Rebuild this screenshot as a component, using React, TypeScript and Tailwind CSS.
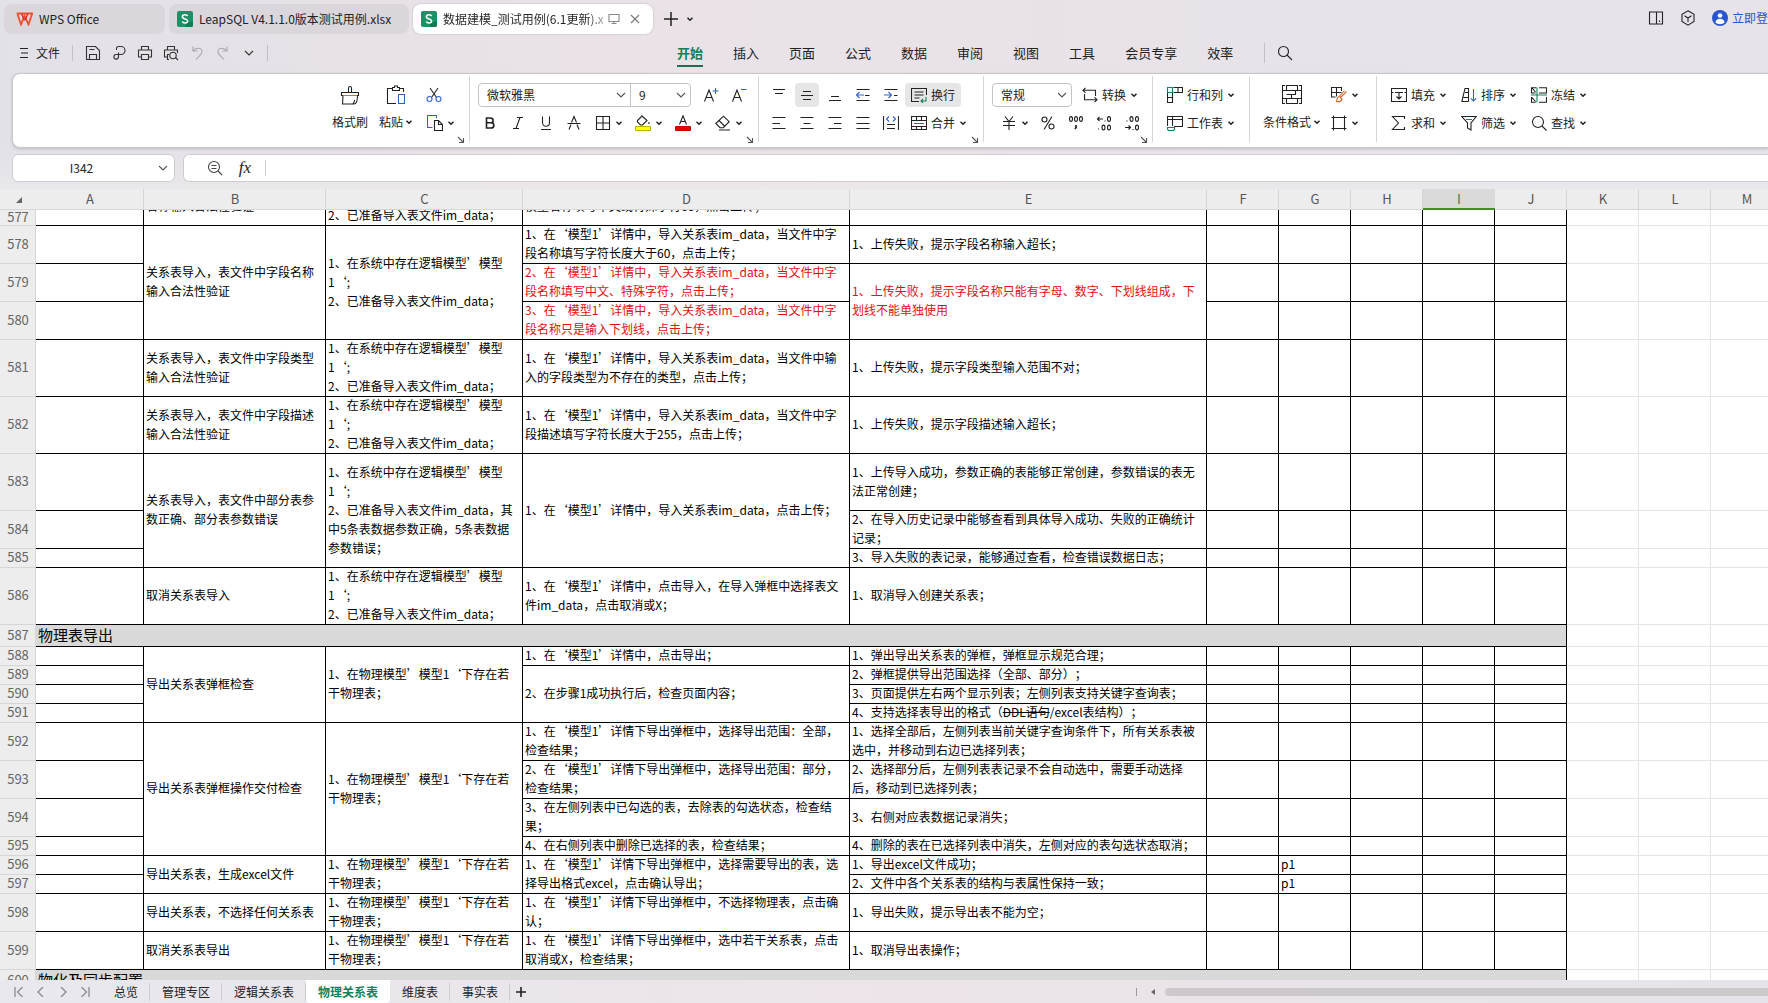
import { useLayoutEffect, useRef } from 'react';
import type { ReactNode } from 'react';

type Cell = { text: ReactNode; span?: number; red?: boolean };
type Row = {
    no: number;
    height: string;
    title?: string;
    b?: Cell;
    c?: Cell;
    d?: Cell;
    e?: Cell;
    g?: string;
};

const H1 = 'h-[19px]';
const H2 = 'h-[38px]';
const H3 = 'h-[57px]';
const HT = 'h-[22px]';

const logicModel = '1、在系统中存在逻辑模型’模型\n1‘;\n2、已准备导入表文件im_data；';
const physicalModel = '1、在物理模型’模型1‘下存在若\n干物理表；';

const rows: Row[] = [
    {
        no: 577,
        height: H3,
        b: { text: '关系表导入，表文件中表\n名称输入合法性验证' },
        c: { text: logicModel },
        d: { text: '1、在‘模型1’详情中，导入关系表im_data，当文件中\n模型名称填写中文或特殊字符60，点击上传；' },
        e: { text: '1、上传失败；' },
    },
    {
        no: 578,
        height: H2,
        b: { text: '关系表导入，表文件中字段名称\n输入合法性验证', span: 3 },
        c: { text: logicModel, span: 3 },
        d: { text: '1、在‘模型1’详情中，导入关系表im_data，当文件中字\n段名称填写字符长度大于60，点击上传；' },
        e: { text: '1、上传失败，提示字段名称输入超长；' },
    },
    {
        no: 579,
        height: H2,
        d: { text: '2、在‘模型1’详情中，导入关系表im_data，当文件中字\n段名称填写中文、特殊字符，点击上传；', red: true },
        e: { text: '1、上传失败，提示字段名称只能有字母、数字、下划线组成，下\n划线不能单独使用', span: 2, red: true },
    },
    {
        no: 580,
        height: H2,
        d: { text: '3、在‘模型1’详情中，导入关系表im_data，当文件中字\n段名称只是输入下划线，点击上传；', red: true },
    },
    {
        no: 581,
        height: H3,
        b: { text: '关系表导入，表文件中字段类型\n输入合法性验证' },
        c: { text: logicModel },
        d: { text: '1、在‘模型1’详情中，导入关系表im_data，当文件中输\n入的字段类型为不存在的类型，点击上传；' },
        e: { text: '1、上传失败，提示字段类型输入范围不对；' },
    },
    {
        no: 582,
        height: H3,
        b: { text: '关系表导入，表文件中字段描述\n输入合法性验证' },
        c: { text: logicModel },
        d: { text: '1、在‘模型1’详情中，导入关系表im_data，当文件中字\n段描述填写字符长度大于255，点击上传；' },
        e: { text: '1、上传失败，提示字段描述输入超长；' },
    },
    {
        no: 583,
        height: H3,
        b: { text: '关系表导入，表文件中部分表参\n数正确、部分表参数错误', span: 3 },
        c: {
            text: '1、在系统中存在逻辑模型’模型\n1‘;\n2、已准备导入表文件im_data，其\n中5条表数据参数正确，5条表数据\n参数错误；',
            span: 3,
        },
        d: { text: '1、在‘模型1’详情中，导入关系表im_data，点击上传；', span: 3 },
        e: { text: '1、上传导入成功，参数正确的表能够正常创建，参数错误的表无\n法正常创建；' },
    },
    { no: 584, height: H2, e: { text: '2、在导入历史记录中能够查看到具体导入成功、失败的正确统计\n记录；' } },
    { no: 585, height: H1, e: { text: '3、导入失败的表记录，能够通过查看，检查错误数据日志；' } },
    {
        no: 586,
        height: H3,
        b: { text: '取消关系表导入' },
        c: { text: logicModel },
        d: { text: '1、在‘模型1’详情中，点击导入，在导入弹框中选择表文\n件im_data，点击取消或X；' },
        e: { text: '1、取消导入创建关系表；' },
    },
    { no: 587, height: HT, title: '物理表导出' },
    {
        no: 588,
        height: H1,
        b: { text: '导出关系表弹框检查', span: 4 },
        c: { text: physicalModel, span: 4 },
        d: { text: '1、在‘模型1’详情中，点击导出；' },
        e: { text: '1、弹出导出关系表的弹框，弹框显示规范合理；' },
    },
    {
        no: 589,
        height: H1,
        d: { text: '2、在步骤1成功执行后，检查页面内容；', span: 3 },
        e: { text: '2、弹框提供导出范围选择（全部、部分）；' },
    },
    { no: 590, height: H1, e: { text: '3、页面提供左右两个显示列表；左侧列表支持关键字查询表；' } },
    { no: 591, height: H1, e: { text: <>4、支持选择表导出的格式（<s>DDL语句</s>/excel表结构）；</> } },
    {
        no: 592,
        height: H2,
        b: { text: '导出关系表弹框操作交付检查', span: 4 },
        c: { text: physicalModel, span: 4 },
        d: { text: '1、在‘模型1’详情下导出弹框中，选择导出范围：全部，\n检查结果；' },
        e: { text: '1、选择全部后，左侧列表当前关键字查询条件下，所有关系表被\n选中，并移动到右边已选择列表；' },
    },
    {
        no: 593,
        height: H2,
        d: { text: '2、在‘模型1’详情下导出弹框中，选择导出范围：部分，\n检查结果；' },
        e: { text: '2、选择部分后，左侧列表表记录不会自动选中，需要手动选择\n后，移动到已选择列表；' },
    },
    {
        no: 594,
        height: H2,
        d: { text: '3、在左侧列表中已勾选的表，去除表的勾选状态，检查结\n果；' },
        e: { text: '3、右侧对应表数据记录消失；' },
    },
    {
        no: 595,
        height: H1,
        d: { text: '4、在右侧列表中删除已选择的表，检查结果；' },
        e: { text: '4、删除的表在已选择列表中消失，左侧对应的表勾选状态取消；' },
    },
    {
        no: 596,
        height: H1,
        b: { text: '导出关系表，生成excel文件', span: 2 },
        c: { text: physicalModel, span: 2 },
        d: { text: '1、在‘模型1’详情下导出弹框中，选择需要导出的表，选\n择导出格式excel，点击确认导出；', span: 2 },
        e: { text: '1、导出excel文件成功；' },
        g: 'p1',
    },
    { no: 597, height: H1, e: { text: '2、文件中各个关系表的结构与表属性保持一致；' }, g: 'p1' },
    {
        no: 598,
        height: H2,
        b: { text: '导出关系表，不选择任何关系表' },
        c: { text: physicalModel },
        d: { text: '1、在‘模型1’详情下导出弹框中，不选择物理表，点击确\n认；' },
        e: { text: '1、导出失败，提示导出表不能为空；' },
    },
    {
        no: 599,
        height: H2,
        b: { text: '取消关系表导出' },
        c: { text: physicalModel },
        d: { text: '1、在‘模型1’详情下导出弹框中，选中若干关系表，点击\n取消或X，检查结果；' },
        e: { text: '1、取消导出表操作；' },
    },
    { no: 600, height: HT, title: '物化及同步配置' },
];

const columns = ['A', 'B', 'C', 'D', 'E', 'F', 'G', 'H', 'I', 'J', 'K', 'L', 'M'];
const menus = ['开始', '插入', '页面', '公式', '数据', '审阅', '视图', '工具', '会员专享', '效率'];
const sheets = ['总览', '管理专区', '逻辑关系表', '物理关系表', '维度表', '事实表'];

const GREEN = '#1a8060';
const BLUE = '#3560d0';

function Icon({ children, size = 16, className = '' }: { children: ReactNode; size?: number; className?: string }) {
    return (
        <svg
            width={size}
            height={size}
            viewBox={`0 0 ${size} ${size}`}
            fill="none"
            stroke="currentColor"
            strokeWidth="1.1"
            className={`shrink-0 ${className}`}
            aria-hidden="true"
        >
            {children}
        </svg>
    );
}

function Caret() {
    return (
        <Icon size={8}>
            <path d="M1.5 2.8 4 5.2l2.5-2.4" strokeWidth="1.5" />
        </Icon>
    );
}

function Chevron({ className = '' }: { className?: string }) {
    return (
        <Icon size={10} className={className}>
            <path d="M1 3l4 4 4-4" />
        </Icon>
    );
}

function Corner() {
    return (
        <Icon size={8} className="absolute right-1 -bottom-0.5 text-[#555]">
            <path d="M1 1l5 5M6.5 2v4.5H2" />
        </Icon>
    );
}

function Divider() {
    return <div className="h-[66px] w-px shrink-0 bg-[#d6d6d6]" />;
}

function IconButton({ label, active, children }: { label: string; active?: boolean; children: ReactNode }) {
    return (
        <button
            aria-label={label}
            className={`flex h-6 w-7 shrink-0 items-center justify-center ${active ? '' : 'hover:bg-black/5'}`}
        >
            <span className={`flex h-6 w-6 items-center justify-center rounded ${active ? 'bg-[#e6e6e6]' : ''}`}>{children}</span>
        </button>
    );
}

function DropButton({ label, children }: { label: string; children: ReactNode }) {
    return (
        <button aria-label={label} className="flex h-6 w-10 shrink-0 items-center gap-1 pl-[7px] hover:bg-black/5">
            {children}
            <Caret />
        </button>
    );
}

function TextButton({ text, caret = true, active, children }: { text: string; caret?: boolean; active?: boolean; children: ReactNode }) {
    return (
        <button
            className={`flex h-6 shrink-0 items-center gap-1 rounded px-1.5 whitespace-nowrap ${active ? 'bg-[#e6e6e6]' : 'hover:bg-black/5'}`}
        >
            {children}
            <span>{text}</span>
            {caret && <Caret />}
        </button>
    );
}

function SheetLogo() {
    return (
        <svg width="16" height="16" viewBox="0 0 16 16" className="shrink-0" aria-hidden="true">
            <rect width="16" height="16" rx="2" fill="#1a9265" />
            <path d="M9 16h5a2 2 0 0 0 2-2v-3H9z" fill="#117a50" />
            <path
                d="M10.6 5.2C10.1 4.2 9.2 3.8 8 3.8c-1.500 0-2.600.8-2.600 2 0 1.300 1.100 1.700 2.600 2.100 1.500.4 2.600.8 2.600 2.100 0 1.200-1.100 2-2.600 2-1.300 0-2.300-.5-2.700-1.600"
                fill="none"
                stroke="#fff"
                strokeWidth="1.6"
            />
        </svg>
    );
}

function TitleBar() {
    return (
        <div className="flex h-9 shrink-0 items-start gap-1 pt-1 pl-1">
            <button className="flex h-[30px] w-[161px] shrink-0 items-center gap-1.5 rounded-lg bg-[#dad6dc] pl-3">
                <svg width="17" height="14" viewBox="0 0 17 14" fill="none" strokeWidth="1.800" className="shrink-0" aria-hidden="true">
                    <path d="M.8 1.500h15.400l-3.700 11L8.500 4 5 12.500 1.300 1.500" stroke="#f0502c" />
                    <path d="M5.500 1.500l3 7M11.800 1.500L9.300 8" stroke="#d6302a" strokeWidth="1.400" />
                </svg>
                WPS Office
            </button>
            <button className="flex h-[30px] w-[240px] shrink-0 items-center gap-1.5 rounded-lg bg-[#dad6dc] pl-2">
                <SheetLogo />
                <span className="whitespace-nowrap">LeapSQL V4.1.1.0版本测试用例.xlsx</span>
            </button>
            <div className="flex h-[30px] w-[240px] shrink-0 items-center rounded-lg bg-white pr-2 pl-2 shadow-[0_0_2px_#b5b0b8]">
                <SheetLogo />
                <span className="ml-1.5 w-[161px] overflow-hidden bg-linear-to-r from-[#222] from-90% to-[#bbb] bg-clip-text whitespace-nowrap text-transparent">
                    数据建模_测试用例(6.1更新).xlsx
                </span>
                <Icon size={12} className="ml-1 text-[#888]">
                    <path d="M1 1.500h10v7H1zM6 8.500v2M3.500 10.500h5" />
                </Icon>
                <button aria-label="关闭" className="ml-2.5">
                    <Icon size={10} className="text-[#777]">
                        <path d="M1 1l8 8M9 1L1 9" />
                    </Icon>
                </button>
            </div>
            <button aria-label="新建" className="ml-[7px] flex h-[30px] items-center">
                <Icon size={14}>
                    <path d="M7 0v14M0 7h14" strokeWidth="1.500" />
                </Icon>
            </button>
            <button aria-label="更多标签" className="ml-1 flex h-[30px] items-center">
                <Caret />
            </button>
            <div className="ml-auto flex h-7 w-[120px] shrink-0 items-center overflow-hidden whitespace-nowrap">
                <Icon className="mr-4">
                    <path d="M1.500 2h13v12h-13zM8.500 2v12M11.500 10.500v1.500" />
                </Icon>
                <Icon className="mr-4">
                    <path d="M8 .8l6 3.500v7.200L8 15.200 2 11.500V4.300zM4.500 5.800L8 8l3.500-2.200M8 8v4" />
                </Icon>
                <button className="flex items-center gap-1 text-[#2a55d0]">
                    <svg width="16" height="16" viewBox="0 0 16 16" className="shrink-0" aria-hidden="true">
                        <circle cx="8" cy="8" r="8" fill="#2a55d0" />
                        <circle cx="8" cy="5.500" r="2.300" fill="#fff" />
                        <path d="M3.500 12.500c0-5 9-5 9 0-2 2.200-7 2.200-9 0z" fill="#fff" />
                    </svg>
                    <span>立即登录</span>
                </button>
            </div>
        </div>
    );
}

function MenuBar() {
    return (
        <div className="mb-[3px] grid h-[34px] shrink-0 grid-cols-[670px_1fr] items-center">
            <div className="flex items-center pl-[18px]">
                <button className="flex items-center gap-1.5">
                    <Icon size={12}>
                        <path d="M2 1.500h8M3 6h7M2 10.500h8" />
                    </Icon>
                    文件
                </button>
                <div className="mx-3 h-4 w-px bg-[#c4c0c6]" />
                <div className="flex items-center gap-2.5 text-[#333]">
                    <button aria-label="保存">
                        <Icon>
                            <path d="M1.500 1.500h9l4 4v9h-13zM4.500 14.500v-5h7v5M4.500 4.500h5" />
                        </Icon>
                    </button>
                    <button aria-label="输出为PDF">
                        <Icon>
                            <path d="M5.500 5V3a2 2 0 0 1 2-1.500h2.500a4 4 0 0 1 0 8H5a2.300 2.300 0 1 0 2.500 2.300V7.500" />
                        </Icon>
                    </button>
                    <button aria-label="打印">
                        <Icon>
                            <path d="M4.500 5V1.500h7V5M4 12H1.500V5h13v7H12M4.500 9.500h7v5h-7z" />
                        </Icon>
                    </button>
                    <button aria-label="打印预览">
                        <Icon>
                            <path d="M4.500 5V1.500h7V5M4 12H1.500V5h13v3M6 14.500H4.500v-5H6M12.500 12.500l2.500 2.500" />
                            <circle cx="10" cy="10.500" r="3.200" />
                        </Icon>
                    </button>
                    <button aria-label="撤销" className="text-[#aaa6ac]">
                        <Icon>
                            <path d="M4 1.500v4.500h4.500M4 6c3-4 9-3.500 9 .8 0 3-3.500 4.500-6 7.700" />
                        </Icon>
                    </button>
                    <button aria-label="恢复" className="text-[#aaa6ac]">
                        <Icon>
                            <path d="M12 1.500v4.500H7.500M12 6C9 2 3 2.500 3 6.800c0 3 3.500 4.500 6 7.700" />
                        </Icon>
                    </button>
                    <button aria-label="更多" className="px-[3px]">
                        <Chevron />
                    </button>
                </div>
                <div className="ml-2.5 h-4 w-px bg-[#c4c0c6]" />
            </div>
            <div className="flex h-full items-center">
                {menus.map((item, i) => (
                    <button
                        key={item}
                        className={
                            i === 0
                                ? 'mr-[15px] ml-[7px] flex h-7 items-center border-b-2 border-[#1a7050] pt-0.5 text-[13px] font-bold text-[#14805a]'
                                : 'flex h-7 items-center px-[15px] text-[13px] whitespace-nowrap'
                        }
                    >
                        {item}
                    </button>
                ))}
                <div className="mr-3 ml-4 h-5 w-px bg-[#c4c0c6]" />
                <button aria-label="搜索">
                    <Icon>
                        <circle cx="6.500" cy="6.500" r="5" />
                        <path d="M10 10l5 5" />
                    </Icon>
                </button>
            </div>
        </div>
    );
}

function Select({ label, value, className }: { label: string; value: string; className: string }) {
    return (
        <label className={`relative flex h-full items-center ${className}`}>
            <select aria-label={label} className="h-full w-full appearance-none bg-transparent pl-2 outline-none">
                <option>{value}</option>
            </select>
            <Chevron className="pointer-events-none absolute right-1 text-[#555]" />
        </label>
    );
}

function Ribbon() {
    return (
        <div className="ml-3 flex h-[75px] shrink-0 items-start overflow-hidden rounded-l-lg border border-r-0 border-[#cbc7cd] bg-white pt-0.5 pl-[315px] shadow-[0_1px_3px_#bcb8be]">
            <div className="relative flex h-[66px] w-[141px] shrink-0 items-center">
                <button className="flex w-11 shrink-0 flex-col items-center gap-1.5 whitespace-nowrap">
                    <Icon size={20}>
                        <path d="M8.500 7V3a1.500 1.500 0 0 1 3 0v4M1.500 7.500h17v3h-17zM3 10.500L2.500 19H14c2.500 0 3.500-3 3.500-8.500M13 19c1-1 1.500-2.500 1.500-4" />
                        <path d="M3 10.500h14" stroke="#c9722e" />
                    </Icon>
                    <span className="h-[22px] leading-[22px]">格式刷</span>
                </button>
                <button className="flex w-12 shrink-0 flex-col items-center gap-1.5 whitespace-nowrap">
                    <Icon size={20}>
                        <path d="M6 3.500H1.500v15H10M14 3.500h3.500V7M6.500 5.500v-3h2v-1.500h3v1.500h2v3z" />
                        <path d="M12.500 9.500h6v9h-6z" stroke="#3560b0" />
                    </Icon>
                    <span className="flex h-[22px] items-center gap-0.5">
                        粘贴
                        <Caret />
                    </span>
                </button>
                <div className="flex flex-col gap-1">
                    <IconButton label="剪切">
                        <Icon>
                            <path d="M4 1l6.500 9.500M12 1L5.500 10.500" />
                            <circle cx="3.500" cy="12" r="2.500" stroke={BLUE} />
                            <circle cx="12.500" cy="12" r="2.500" stroke={BLUE} />
                        </Icon>
                    </IconButton>
                    <DropButton label="复制">
                        <Icon>
                            <path d="M5.500 12.500h-5v-12h9V3" stroke={BLUE} />
                            <path d="M7.500 5.500h4l4 4v6h-8zM11.500 5.500v4h4" />
                        </Icon>
                    </DropButton>
                </div>
                <Corner />
            </div>
            <Divider />

            <div className="relative flex h-[66px] w-[288px] shrink-0 flex-col justify-center gap-1 pl-1.5">
                <div className="flex h-6 items-center">
                    <div className="mr-1.5 ml-0.5 flex h-6 w-[213px] items-center rounded border border-[#c2c2c2]">
                        <Select label="字体" value="微软雅黑" className="w-[152px] border-r border-[#c2c2c2]" />
                        <Select label="字号" value="9" className="flex-1" />
                    </div>
                    <IconButton label="增大字号">
                        <Icon>
                            <path d="M1.500 14.500L6 3l4.500 11.500M3 10.500h6" />
                            <path d="M12.500 1v6M9.500 4h6" stroke={BLUE} />
                        </Icon>
                    </IconButton>
                    <IconButton label="减小字号">
                        <Icon>
                            <path d="M1.500 14.500L6 3l4.500 11.500M3 10.500h6" />
                            <path d="M10 2.500h5.500" stroke={BLUE} />
                        </Icon>
                    </IconButton>
                </div>
                <div className="flex h-6 items-center">
                    <IconButton label="加粗">
                        <Icon>
                            <path d="M4.500 3h4c3.500 0 3.500 4.800 0 4.800h-4zM4.500 7.800H9c3.800 0 3.800 5.200 0 5.200H4.500z" strokeWidth="1.600" />
                        </Icon>
                    </IconButton>
                    <IconButton label="倾斜">
                        <Icon>
                            <path d="M7 2.500h6M3 13.500h6M10 2.500l-4 11" />
                        </Icon>
                    </IconButton>
                    <IconButton label="下划线">
                        <Icon>
                            <path d="M4.500 1.500v6c0 5 7 5 7 0v-6M3 14.500h10" />
                        </Icon>
                    </IconButton>
                    <IconButton label="删除线">
                        <Icon>
                            <path d="M5.500 7.500L8 1.500l2.500 6M1.500 8.500h13M5 9.500l-2 5M11 9.500l2 5" />
                        </Icon>
                    </IconButton>
                    <DropButton label="边框">
                        <Icon>
                            <path d="M1.500 1.500h13v13h-13zM8 1.500v13M1.500 8h13" />
                        </Icon>
                    </DropButton>
                    <DropButton label="填充颜色">
                        <Icon>
                            <path d="M6.500.5l5.500 5-4.500 4.500H5.500L2.500 7V5.500l4-4M14 7v2" />
                            <rect x=".5" y="11.500" width="15" height="4" rx="1" fill="#ff0" stroke="#b9b900" />
                        </Icon>
                    </DropButton>
                    <DropButton label="字体颜色">
                        <Icon>
                            <path d="M4.500 9.500L8 .8l3.500 8.700M5.700 6.500h4.600" />
                            <rect x=".5" y="11.500" width="15" height="4" rx="1" fill="#f00000" stroke="#c00000" />
                        </Icon>
                    </DropButton>
                    <DropButton label="清除">
                        <Icon>
                            <path d="M.8 8.500L8.500 1.200l5.700 5.500-6 6H5zM4 5.500l5.500 5.500M4 15h11" />
                        </Icon>
                    </DropButton>
                </div>
                <Corner />
            </div>
            <Divider />

            <div className="relative flex h-[66px] w-[224px] shrink-0 flex-col justify-center gap-1 pl-1.5">
                <div className="flex h-6 items-center">
                    <IconButton label="顶端对齐">
                        <Icon>
                            <path d="M2 2.500h12M4 6.500h8" />
                        </Icon>
                    </IconButton>
                    <IconButton label="垂直居中" active>
                        <Icon>
                            <path d="M4 4.500h8M2 8.500h12M4 12.500h8" />
                        </Icon>
                    </IconButton>
                    <IconButton label="底端对齐">
                        <Icon>
                            <path d="M4 9.500h8M2 13.500h12" />
                        </Icon>
                    </IconButton>
                    <IconButton label="减少缩进">
                        <Icon>
                            <path d="M1.500 2.500h13M10 8.500h4.500M1.500 13.500h13" />
                            <path d="M1.500 8H9M4.500 5l-3 3 3 3" stroke={BLUE} />
                        </Icon>
                    </IconButton>
                    <IconButton label="增加缩进">
                        <Icon>
                            <path d="M1.500 2.500h13M11 8.500h3.500M1.500 13.500h13" />
                            <path d="M1 8h7.500M5.500 5l3 3-3 3" stroke={BLUE} />
                        </Icon>
                    </IconButton>
                    <TextButton text="换行" caret={false} active>
                        <Icon>
                            <path d="M15.500 8V1.500h-15v13H8M3.500 5h9M3.500 8h9M3.500 11h5" />
                            <path d="M15 10v4h-4.500M12 12l-2 2 2 2" stroke={GREEN} />
                        </Icon>
                    </TextButton>
                </div>
                <div className="flex h-6 items-center">
                    <IconButton label="左对齐">
                        <Icon>
                            <path d="M1.500 2.500h13M1.500 8.500H9M1.500 13.500h13" />
                        </Icon>
                    </IconButton>
                    <IconButton label="水平居中">
                        <Icon>
                            <path d="M1.500 2.500h13M4.500 8.500h7M1.500 13.500h13" />
                        </Icon>
                    </IconButton>
                    <IconButton label="右对齐">
                        <Icon>
                            <path d="M1.500 2.500h13M7 8.500h7.500M1.500 13.500h13" />
                        </Icon>
                    </IconButton>
                    <IconButton label="两端对齐">
                        <Icon>
                            <path d="M1.500 2.500h13M1.500 8.500h13M1.500 13.500h13" />
                        </Icon>
                    </IconButton>
                    <IconButton label="分散对齐">
                        <Icon>
                            <path d="M.5 1v14M15.500 1v14M4 9.500h8M4 13.500h8" />
                            <path d="M6 1.500L3.500 4 6 6.500M10 1.500L12.500 4 10 6.500" stroke={BLUE} />
                        </Icon>
                    </IconButton>
                    <TextButton text="合并">
                        <Icon>
                            <path d="M.5 1.500h15v13H.5zM.5 5.500h15M.5 11.500h15M5.500 1.500v4M10.500 1.500v4M5.500 11.500v3M10.500 11.500v3" />
                            <path d="M3 8.500h10" stroke={GREEN} />
                        </Icon>
                    </TextButton>
                </div>
                <Corner />
            </div>
            <Divider />

            <div className="relative flex h-[66px] w-[168px] shrink-0 flex-col justify-center gap-1 pl-2">
                <div className="flex h-6 items-center">
                    <div className="flex h-6 w-20 shrink-0 items-center rounded border border-[#c2c2c2]">
                        <Select label="数字格式" value="常规" className="flex-1" />
                    </div>
                    <div className="ml-1">
                        <TextButton text="转换">
                            <Icon>
                                <path d="M3.500.8L1 3.300l2.500 2.500M1 3.300h12.500V9M2.500 7v5.700H15M12.500 10.200l2.500 2.500-2.500 2.500" />
                            </Icon>
                        </TextButton>
                    </div>
                </div>
                <div className="flex h-6 items-center pl-0.5">
                    <DropButton label="货币">
                        <Icon>
                            <path d="M4 1.500l4 5 4-5M2 6.500h12M2 10.500h12M8 6.500V15" />
                        </Icon>
                    </DropButton>
                    <IconButton label="百分比">
                        <Icon>
                            <circle cx="4.500" cy="4.500" r="2.500" />
                            <circle cx="11.500" cy="11.500" r="2.500" />
                            <path d="M12 1.500l-8 13" />
                        </Icon>
                    </IconButton>
                    <IconButton label="千位分隔">
                        <Icon>
                            <ellipse cx="3" cy="4" rx="1.500" ry="2.400" />
                            <ellipse cx="8" cy="4" rx="1.500" ry="2.400" />
                            <ellipse cx="13" cy="4" rx="1.500" ry="2.400" />
                            <path d="M8 10v2.500L7 14" strokeWidth="1.700" />
                        </Icon>
                    </IconButton>
                    <IconButton label="增加小数位">
                        <Icon>
                            <path d="M7 4H1.500M3.500 2l-2 2 2 2M9 5.500v1M2.500 13.500v1" />
                            <ellipse cx="13" cy="4" rx="1.500" ry="2.400" />
                            <ellipse cx="7.500" cy="12.500" rx="1.500" ry="2.400" />
                            <ellipse cx="13" cy="12.500" rx="1.500" ry="2.400" />
                        </Icon>
                    </IconButton>
                    <IconButton label="减少小数位">
                        <Icon>
                            <path d="M1 12.500h5.500M4.500 10.500l2 2-2 2M9 14v1M3 5.500v1" />
                            <ellipse cx="7.500" cy="4" rx="1.500" ry="2.400" />
                            <ellipse cx="13" cy="4" rx="1.500" ry="2.400" />
                            <ellipse cx="13" cy="12.500" rx="1.500" ry="2.400" />
                        </Icon>
                    </IconButton>
                </div>
                <Corner />
            </div>
            <Divider />

            <div className="flex h-[66px] w-24 shrink-0 flex-col justify-center gap-1 pl-2">
                <TextButton text="行和列">
                    <Icon>
                        <path d="M6.500.5h9v5h-9M11 .5v5M.5 5.500v10h5v-10M.5 10.500h5" />
                        <path d="M.5.5h5v5h-5z" stroke={GREEN} />
                    </Icon>
                </TextButton>
                <TextButton text="工作表">
                    <Icon>
                        <path d="M.5 11V1.500h15v10H7M.5 4.500h15M5.500 1.500V11" />
                        <path d="M.5 12.500h7v2l-1 1h-5l-1-1z" stroke={GREEN} />
                    </Icon>
                </TextButton>
            </div>
            <Divider />

            <div className="flex h-[66px] w-[126px] shrink-0 items-center pl-2.5">
                <button className="flex w-16 shrink-0 flex-col items-center gap-1.5 whitespace-nowrap">
                    <Icon size={20}>
                        <path d="M3 .5H.5v18H3M17 .5h2.500v18H17M4.500 .5h11v5h-11zM4.500 13.500h11v5h-11zM.5 5.500h4M.5 13.500h4M15.500 5.500h4M15.500 13.500h4M4.500 9.500h9v-4M9.500 9.500v4" />
                    </Icon>
                    <span className="flex h-[22px] items-center gap-0.5">
                        条件格式
                        <Caret />
                    </span>
                </button>
                <div className="flex flex-col gap-1">
                    <DropButton label="表格样式">
                        <Icon>
                            <path d="M10.500 4V.5H.5v9.500h4M.5 5.500h10M5.500.5v9" />
                            <path d="M15.500 4.500L9.500 10.500M13.500 3.500l-5 5.500M8.500 9.500c-2 0-2.500 2-3 5 3 .5 5-.5 5.500-2.500z" stroke="#d0682a" />
                        </Icon>
                    </DropButton>
                    <DropButton label="单元格样式">
                        <Icon>
                            <path d="M2.500.5v15M13.500.5v15M.5 2.500h15M.5 13.500h15" />
                        </Icon>
                    </DropButton>
                </div>
            </div>
            <Divider />

            <div className="grid h-[66px] shrink-0 grid-cols-[70px_70px_70px] content-center gap-y-1 pl-2">
                <TextButton text="填充">
                    <Icon>
                        <path d="M2.500 5.500h-2v-4h15v4h-2M2.500 5.500h-2v9h15v-9h-2M4 5.500h8M8 6v6M5.500 9.500L8 12l2.500-2.500" />
                    </Icon>
                </TextButton>
                <TextButton text="排序">
                    <Icon>
                        <path d="M.8 14.500L4 1.500h3.500v13M2.500 10.500h5M.5 14.500h7M4 5.500h3.500" />
                        <path d="M12.500 2v12M9.800 11.300l2.700 2.700 2.700-2.700" stroke={BLUE} />
                    </Icon>
                </TextButton>
                <TextButton text="冻结">
                    <Icon>
                        <path d="M4.500 6H.5V.8h5M8 .8h7.500V6H8M.5 10v5.200h4M8 15.200h7.500V10M1 1l3.500 4M1 10.500l3.500 4" />
                        <path d="M6 .5v15M0 8h16" stroke={GREEN} />
                    </Icon>
                </TextButton>
                <TextButton text="求和">
                    <Icon>
                        <path d="M13.500 4V1.500h-12L7.500 8l-6 6.500h12V12" />
                    </Icon>
                </TextButton>
                <TextButton text="筛选">
                    <Icon>
                        <path d="M.8 1.500h14.400L10 8v7l-3.500-2V8z" />
                        <path d="M5 4.500h6" stroke={GREEN} />
                    </Icon>
                </TextButton>
                <TextButton text="查找">
                    <Icon>
                        <circle cx="7" cy="7" r="5.500" />
                        <path d="M11 11l4.500 4.500" />
                    </Icon>
                </TextButton>
            </div>
        </div>
    );
}

function FormulaBar() {
    return (
        <div className="mt-1.5 ml-3 flex h-7 shrink-0 items-center gap-2">
            <div className="flex h-7 w-[163px] shrink-0 items-center rounded-md border border-[#cfcbd0] bg-white pr-1.5">
                <input aria-label="名称框" defaultValue="I342" className="w-full min-w-0 flex-1 bg-transparent pr-2 text-center outline-none" />
                <Chevron className="text-[#555]" />
            </div>
            <div className="flex h-7 flex-1 items-center rounded-l-md border border-r-0 border-[#cfcbd0] bg-white pl-[23px]">
                <Icon className="text-[#444]">
                    <circle cx="7" cy="7" r="5.500" />
                    <path d="M11 11l4 4M4.500 8.500h5M4.500 5.500h5" />
                </Icon>
                <button aria-label="插入函数" className="ml-3.5 w-4 text-center font-['Liberation_Serif',serif] text-[17px] leading-5 italic">
                    fx
                </button>
                <div className="ml-3 h-4 w-px bg-[#d0d0d0]" />
                <input aria-label="编辑栏" className="min-w-0 flex-1 bg-transparent px-2 outline-none" />
            </div>
        </div>
    );
}

const LINE = 'shadow-[inset_-1px_-1px_0_#000]';
const FAINT = 'shadow-[inset_-1px_-1px_0_#e4e4e4]';

function TextCell({ cell }: { cell?: Cell }) {
    if (!cell) return null;
    return (
        <td rowSpan={cell.span} className={`pl-0.5 whitespace-pre ${LINE} ${cell.red ? 'text-[#e01010]' : ''}`}>
            <div className="-mt-1">{cell.text}</div>
        </td>
    );
}

function ColumnWidths() {
    return (
        <colgroup>
            <col className="w-9" />
            <col className="w-[108px]" />
            <col className="w-[182px]" />
            <col className="w-[197px]" />
            <col className="w-[327px]" />
            <col className="w-[357px]" />
            <col span={8} className="w-[72px]" />
        </colgroup>
    );
}

function ColumnHeader() {
    return (
        <div className="shrink-0 overflow-hidden">
            <table className="w-[1783px] table-fixed border-separate border-spacing-0 text-[13px] leading-[19px] text-[#555]">
                <ColumnWidths />
                <thead>
                    <tr className="h-[21px]">
                        <th aria-label="全选" className="bg-[#ededed] shadow-[inset_0_-1px_0_#d6d6d6]">
                            <Icon size={8} className="ml-[15px]">
                                <path d="M7 1v6H1z" fill="#666" stroke="none" />
                            </Icon>
                        </th>
                        {columns.map((col) => (
                            <th
                                key={col}
                                className={
                                    col === 'I'
                                        ? 'bg-[#dadada] font-normal text-[#14805a] shadow-[inset_0_-2px_0_#4a8c2c]'
                                        : 'bg-[#ededed] font-normal shadow-[inset_-1px_-1px_0_#d6d6d6]'
                                }
                            >
                                <div className="-mt-0.5">{col}</div>
                            </th>
                        ))}
                    </tr>
                </thead>
            </table>
        </div>
    );
}

function Sheet() {
    const ref = useRef<HTMLDivElement>(null);

    // the view starts in the middle of row 577
    useLayoutEffect(() => {
        if (ref.current) ref.current.scrollTop = 41;
    }, []);

    return (
        <div ref={ref} className="min-h-0 flex-1 overflow-hidden bg-white">
            <table className="w-[1783px] table-fixed border-separate border-spacing-0 leading-[19px] text-black [text-spacing-trim:space-all]">
                <ColumnWidths />
                <tbody>
                    {rows.map((row, i) => (
                        <tr key={row.no} className={row.height}>
                            <th
                                className={`bg-[#ededed] text-[13px] font-normal text-[#666] shadow-[inset_-1px_-1px_0_#d6d6d6] ${i === 0 ? 'align-bottom' : ''}`}
                            >
                                <div className="-mt-1">{row.no}</div>
                            </th>
                            {row.title ? (
                                <td colSpan={10} className={`bg-[#d9d9d9] pl-0.5 text-[15px] ${LINE}`}>
                                    <div className="-mt-1">{row.title}</div>
                                </td>
                            ) : (
                                <>
                                    <td className={LINE} />
                                    <TextCell cell={row.b} />
                                    <TextCell cell={row.c} />
                                    <TextCell cell={row.d} />
                                    <TextCell cell={row.e} />
                                    <td className={LINE} />
                                    <TextCell cell={{ text: row.g }} />
                                    <td className={LINE} />
                                    <td className={LINE} />
                                    <td className={LINE} />
                                </>
                            )}
                            <td className={FAINT} />
                            <td className={FAINT} />
                            <td className={FAINT} />
                        </tr>
                    ))}
                </tbody>
            </table>
        </div>
    );
}

function SheetTabs() {
    return (
        <div className="flex h-[23px] shrink-0 items-center bg-linear-to-r from-[#e8e8ee] via-[#ece4e9] to-[#e6e4ea]">
            <div className="flex w-[102px] shrink-0 items-center gap-3 pl-3.5 text-[#8a8a8e]">
                <button aria-label="第一个工作表">
                    <Icon size={10}>
                        <path d="M1 0v10M8.500 0l-5 5 5 5" strokeWidth="1.300" />
                    </Icon>
                </button>
                <button aria-label="上一个工作表">
                    <Icon size={10}>
                        <path d="M7 0L2 5l5 5" strokeWidth="1.300" />
                    </Icon>
                </button>
                <button aria-label="下一个工作表">
                    <Icon size={10}>
                        <path d="M3 0l5 5-5 5" strokeWidth="1.300" />
                    </Icon>
                </button>
                <button aria-label="最后一个工作表">
                    <Icon size={10}>
                        <path d="M9 0v10M1.500 0l5 5-5 5" strokeWidth="1.300" />
                    </Icon>
                </button>
            </div>
            {sheets.map((name) => (
                <button
                    key={name}
                    className={
                        name === '物理关系表'
                            ? 'h-full rounded-b bg-white px-3 font-bold whitespace-nowrap text-[#14805a]'
                            : 'h-[18px] border-r border-[#cfccd2] pr-[11px] pl-3 leading-[18px] whitespace-nowrap'
                    }
                >
                    {name}
                </button>
            ))}
            <button aria-label="新建工作表" className="ml-1.5">
                <Icon size={10}>
                    <path d="M5 0v10M0 5h10" strokeWidth="1.600" />
                </Icon>
            </button>
            <div className="ml-auto flex w-[632px] shrink-0 items-center">
                <div className="h-2 w-px bg-[#999]" />
                <Icon size={8} className="ml-3 text-[#666]">
                    <path d="M6 1v6L2 4z" fill="currentColor" stroke="none" />
                </Icon>
                <div className="ml-2 h-2 flex-1 rounded-l-full bg-[#cdc8cc]" />
            </div>
        </div>
    );
}

export default function App() {
    return (
        <div
            lang="zh-CN"
            className="flex h-screen flex-col overflow-hidden bg-[#ededed] bg-linear-to-r from-[#e3e1e8] via-[#eae2e7] via-35% to-[#e6e3eb] font-['Noto_Sans_CJK_SC',sans-serif] text-[12px] leading-[18px] text-[#222]"
        >
            <TitleBar />
            <MenuBar />
            <Ribbon />
            <div className="flex min-h-0 flex-1 flex-col bg-linear-to-b from-transparent to-[#ededed] to-10%">
                <FormulaBar />
                <div className="h-[7px] shrink-0" />
                <ColumnHeader />
                <Sheet />
            </div>
            <SheetTabs />
        </div>
    );
}
